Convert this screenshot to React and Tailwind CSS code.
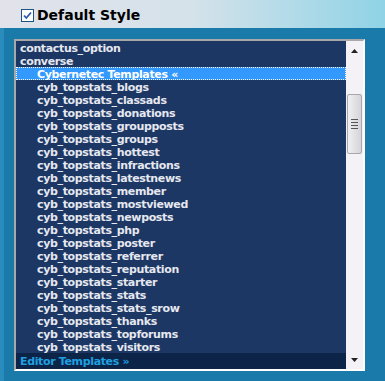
const items = [
  { label: 'contactus_option', level: 0 },
  { label: 'converse', level: 0 },
  { label: 'Cybernetec Templates «', level: 1, selected: true },
  { label: 'cyb_topstats_blogs', level: 1 },
  { label: 'cyb_topstats_classads', level: 1 },
  { label: 'cyb_topstats_donations', level: 1 },
  { label: 'cyb_topstats_groupposts', level: 1 },
  { label: 'cyb_topstats_groups', level: 1 },
  { label: 'cyb_topstats_hottest', level: 1 },
  { label: 'cyb_topstats_infractions', level: 1 },
  { label: 'cyb_topstats_latestnews', level: 1 },
  { label: 'cyb_topstats_member', level: 1 },
  { label: 'cyb_topstats_mostviewed', level: 1 },
  { label: 'cyb_topstats_newposts', level: 1 },
  { label: 'cyb_topstats_php', level: 1 },
  { label: 'cyb_topstats_poster', level: 1 },
  { label: 'cyb_topstats_referrer', level: 1 },
  { label: 'cyb_topstats_reputation', level: 1 },
  { label: 'cyb_topstats_starter', level: 1 },
  { label: 'cyb_topstats_stats', level: 1 },
  { label: 'cyb_topstats_stats_srow', level: 1 },
  { label: 'cyb_topstats_thanks', level: 1 },
  { label: 'cyb_topstats_topforums', level: 1 },
  { label: 'cyb_topstats_visitors', level: 1 },
]

export default function App() {
  return (
    <div className="w-[385px] h-[381px] overflow-hidden bg-[#1a7aa9] font-['DejaVu_Sans',Verdana,sans-serif]">
      {/* Header */}
      <div className="h-[28px] flex items-center gap-[3px] pl-[21px] pt-[2px] bg-gradient-to-r from-[#e2e2ea] via-[#d4e2ea] to-[#8fd3e6]">
        <span className="w-[13px] h-[13px] border border-[#1c5180] bg-white flex items-center justify-center">
          <svg width="9" height="9" viewBox="0 0 9 9">
            <path d="M1 4.5 L3.3 7 L8 1.5" stroke="#2a5bb0" strokeWidth="1.8" fill="none" />
          </svg>
        </span>
        <span className="text-[14px] font-bold text-black leading-none">Default Style</span>
      </div>

      {/* Body */}
      <div className="flex h-[353px]">
        <div className="w-[4px] bg-[#2a8cbc]" />
        <div className="pl-[10px] pt-[11px]">
          <div className="w-[351px] h-[332px] flex border-t-2 border-l-2 border-t-[#a8a8a8] border-l-[#a8a8a8] border-b-2 border-r-2 border-b-white border-r-white">
            <div className="flex-1 bg-[#1c3764] flex flex-col">
              {items.map((it, i) => (
                <div
                  key={i}
                  className={
                    'h-[13px] shrink-0 flex items-center pt-[2px] text-[11px] font-bold leading-none tracking-[-0.35px] whitespace-nowrap ' +
                    (it.level ? 'pl-[21px] ' : 'pl-[4px] ') +
                    (it.selected
                      ? 'bg-[#3399ff] text-white outline outline-1 outline-dotted outline-white -outline-offset-1'
                      : 'text-[#e6e8f0]')
                  }
                >
                  {it.label}
                </div>
              ))}
              <div className="flex-1 flex items-center pl-[4px] text-[11px] font-bold leading-none tracking-[-0.35px] text-[#1ea0e0] bg-[#0c2448]">
                Editor Templates »
              </div>
            </div>
            {/* Scrollbar */}
            <div className="w-[17px] bg-[#f4f2f6] flex flex-col items-center">
              <div className="h-[17px] flex items-center justify-center pt-[2px]">
                <svg width="7" height="4" viewBox="0 0 7 4"><path d="M3.5 0 L7 4 L0 4 Z" fill="#222" /></svg>
              </div>
              <div className="mt-[36px] w-[15px] h-[60px] rounded-[2px] border border-[#a7a7ad] bg-gradient-to-r from-[#f0f0f2] to-[#d4d4d9] flex flex-col items-center justify-center gap-[2px]">
                <div className="w-[7px] h-px bg-[#555]" />
                <div className="w-[7px] h-px bg-[#555]" />
                <div className="w-[7px] h-px bg-[#555]" />
                <div className="w-[7px] h-px bg-[#555]" />
              </div>
              <div className="flex-1" />
              <div className="h-[17px] flex items-center justify-center pb-[2px]">
                <svg width="7" height="4" viewBox="0 0 7 4"><path d="M0 0 L7 0 L3.5 4 Z" fill="#222" /></svg>
              </div>
            </div>
          </div>
        </div>
      </div>
    </div>
  )
}
